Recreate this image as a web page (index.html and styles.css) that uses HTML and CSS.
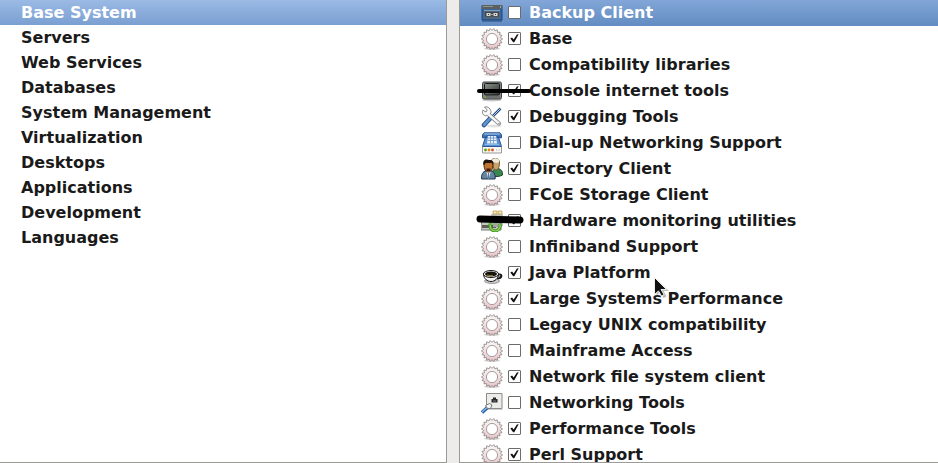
FILE: index.html
```
<!DOCTYPE html>
<html lang="en">
<head>
<meta charset="utf-8">
<title>Package selection</title>
<link rel="stylesheet" href="styles.css">
</head>
<body>
<svg class="defs" aria-hidden="true">
  <defs>
    <linearGradient id="gearFill" x1="0" y1="0" x2="0" y2="1"><stop offset="0" stop-color="#fbfaf8"/><stop offset="1" stop-color="#e8c3ca"/></linearGradient>
    <linearGradient id="blueFill" x1="0" y1="0" x2="0" y2="1"><stop offset="0" stop-color="#6b9bd2"/><stop offset="1" stop-color="#28569a"/></linearGradient>
    <linearGradient id="screenFill" x1="0" y1="0" x2="1" y2="1"><stop offset="0" stop-color="#8b908a"/><stop offset="1" stop-color="#30352f"/></linearGradient>
    <symbol id="gear" viewBox="-11 -11 22 22">
      <ellipse cx="0" cy="9.500" rx="8" ry="1.500" fill="#d5d2d0"/>
      <path d="M10.600 0L8.470 1.490 9.960 3.630 7.450 4.300 8.120 6.810 5.530 6.590 5.300 9.180 2.940 8.080 1.840 10.440 0 8.600-1.840 10.440-2.940 8.080-5.300 9.180-5.530 6.590-8.120 6.810-7.450 4.300-9.960 3.630-8.470 1.490-10.600 0-8.470-1.490-9.960-3.630-7.450-4.300-8.120-6.810-5.530-6.590-5.300-9.180-2.940-8.080-1.840-10.440 0-8.600 1.840-10.440 2.940-8.080 5.300-9.180 5.530-6.590 8.120-6.810 7.450-4.300 9.960-3.630 8.470-1.490z" fill="url(#gearFill)" stroke="#85807e" stroke-width=".8"/>
      <circle r="5.600" fill="#fff" stroke="#9a9694" stroke-width=".9"/>
    </symbol>
    <symbol id="tape" viewBox="0 0 22 22">
      <path d="M1 3.500h20v14.500H1z" fill="#37679f" stroke="#1f477e"/>
      <path d="M1 3h20v4H1z" fill="#59605f"/><path d="M2 4.500h10" stroke="#8b9491"/>
      <path d="M19 5h1" stroke="#eee"/>
      <path d="M3 8h16v9H3z" fill="#536579"/><path d="M3 8.500h16" stroke="#7f9cb9"/>
      <path d="M4 10h14v4.500H4z" fill="#41484d"/>
      <path d="M5.500 11h4v3h-4zM12.500 11h4v3h-4z" fill="#d8d8d5"/>
      <path d="M9.500 12.500h3" stroke="#aaa"/><path d="M7 12.500h1M14 12.500h1" stroke="#333"/>
      <path d="M1 19h20" stroke="#274d7e"/>
    </symbol>
    <symbol id="terminal" viewBox="0 0 22 22">
      <ellipse cx="11" cy="20" rx="10" ry="1.500" fill="#c8c8c8"/>
      <rect x="1.500" y="2" width="19" height="17" rx="1.500" fill="#85888a" stroke="#3d403e"/>
      <rect x="3.500" y="3.500" width="15" height="11.500" rx="1" fill="url(#screenFill)" stroke="#171917"/>
      <path d="M3 17h16" stroke="#555854"/><path d="M3 17h2" stroke="#76c52a"/>
    </symbol>
    <symbol id="tools" viewBox="0 0 22 22">
      <ellipse cx="13" cy="20" rx="8" ry="1.500" fill="#e1e1e1"/>
      <path d="M19.500 2.500L11 11" stroke="#204a87" stroke-width="2.500"/><path d="M19.500 2.500L11 11" stroke="#b9cee4"/>
      <path d="M10 11.500L3 19" stroke="#204a87" stroke-width="4.500" stroke-linecap="round"/><path d="M10 11.500L3 19" stroke="#6295d0" stroke-width="2.600" stroke-linecap="round"/>
      <path d="M6 7L18 17.500" stroke="#777b79" stroke-width="4" stroke-linecap="round"/>
      <path d="M3.500 1L6.200 4 5 6 1.800 4.200C.5 8 3 10.800 7 9.400L10 7C10.400 3 7 0 3.500 1z" fill="#fafafa" stroke="#777b79" stroke-width=".9"/>
      <path d="M6 7L18 17.500" stroke="#f7f7f7" stroke-width="2.400" stroke-linecap="round"/>
      <circle cx="18" cy="17.500" r=".7" fill="#777"/>
    </symbol>
    <symbol id="phone" viewBox="0 0 22 22">
      <path d="M4.500 5h13l3 9.500h-19z" fill="#5a91d0" stroke="#28569a"/>
      <path d="M1.500 14.500h19V21h-19z" fill="#f8f8f5" stroke="#999a96"/>
      <path d="M1.500 14.500h19" stroke="#28569a"/>
      <circle cx="4.500" cy="18" r="1.400" fill="#57a414"/><circle cx="8" cy="18" r="1.400" fill="#e08b12"/><circle cx="11.500" cy="18" r="1.400" fill="#d9503a"/><path d="M15.500 17v2M18 17v2" stroke="#ccc"/>
      <path d="M3 .8h16l1.500 2v3h-4V4h-11v1.800h-4v-3z" fill="url(#blueFill)" stroke="#28569a"/>
      <path d="M3.500 2h15" stroke="#9bc0e8"/>
      <path d="M7 4h8l1 7.500H6z" fill="#eaf0f7"/><path d="M7 6h8M6.500 8.500h9M9.500 4v7.500M12.500 4v7.500" stroke="#6793c4" stroke-width=".8"/>
      <path d="M4 12.500h14" stroke="#8db7e4"/>
    </symbol>
    <symbol id="people" viewBox="0 0 22 22">
      <path d="M11 18c0-6 2-7.500 5-7.500 4 0 6 3 5.500 6.500-2 1.500-7 2-10.500 1z" fill="#3b8750" stroke="#173e25"/>
      <path d="M10.500 3c0-3.500 8-4 8 1 0 4-1 8-3.500 8s-4-5-4.500-9z" fill="#c9a26c" stroke="#6e5427"/>
      <path d="M10.500 3.500c0-4 8-4.500 8 0l-2 1.500-5-1z" fill="#f0eadc"/>
      <path d="M.6 21c-.4-6 2-8.500 7-8.500s7 3 6.500 8.500z" fill="#6485a5" stroke="#1d344e"/>
      <path d="M5 13l2.500 8L10 13z" fill="#dce4ec"/><path d="M7.500 15v5" stroke="#647586"/>
      <path d="M3 6c0-4 9-5 9 0 .3 4-1.500 8-4.500 8S3 11 3 6z" fill="#bd742e" stroke="#3d1e0d"/>
      <path d="M2.500 7C1 1 6 .8 8 2c4-.5 5 2 4 5L11 5 5 5z" fill="#20120d"/>
      <path d="M5.500 10.500h4V13h-4z" fill="#3b1b0e"/>
    </symbol>
    <symbol id="hardware" viewBox="0 0 22 22">
      <path d="M2 8h15l3 7v5H0v-5z" fill="#c5c7c3" stroke="#797c77"/>
      <path d="M1 16.500h14" stroke="#5d605a" stroke-width="3"/>
      <path d="M10 4h12v12H12z" fill="#bfc1b9"/>
      <path d="M12 1h4v3h-4zM17 1h4v3h-4z" fill="#f9e5b0" stroke="#b3964b" stroke-width=".7"/>
      <path d="M12 11h9v6h-9z" fill="#9fa69a"/>
      <path d="M9.500 14a5 5 0 1 0 9-.5" fill="none" stroke="#408d22" stroke-width="3"/>
      <path d="M9.500 14a5 5 0 1 0 9-.5" fill="none" stroke="#8ad853" stroke-width="1.400"/>
      <path d="M6.500 15.500l2.500-4 3.500 3z" fill="#62b436"/>
    </symbol>
    <symbol id="coffee" viewBox="0 0 22 22">
      <ellipse cx="11" cy="19" rx="7.500" ry="2.500" fill="#ccc" stroke="#666" stroke-width=".6"/>
      <path d="M17 13c4.500-1 4 3-1 3" fill="none" stroke="#111" stroke-width="2.600"/><path d="M17 13.200c3-.5 2.500 2-1 2.300" fill="none" stroke="#eee" stroke-width=".8"/>
      <path d="M2.500 12.500c.5 4 3.500 7 7.500 7s7-3 7.500-7z" fill="#f4f4f2" stroke="#151515"/>
      <ellipse cx="10" cy="12" rx="7.600" ry="3.500" fill="#fafafa" stroke="#151515"/>
      <ellipse cx="10" cy="12" rx="6" ry="2.400" fill="#15130a"/><path d="M6 13q3 1.200 6 .2" fill="none" stroke="#8c7b34"/>
    </symbol>
    <symbol id="network" viewBox="0 0 22 22">
      <path d="M5.500 1.500h15.500v15H5.500z" fill="#ececea" stroke="#8a8c88"/>
      <path d="M5.500 17.500h16" stroke="#cfcfcf"/>
      <path d="M10.500 10.500V7h1.500V5.500h3V7h1.500v3.500z" fill="#282a29"/><path d="M12 9h3" stroke="#777"/>
      <path d="M1 20.500L7 15" stroke="#2c62a6" stroke-width="3.600"/><path d="M1 20L7 14.500" stroke="#8ab8e8" stroke-width="1.200"/>
      <path d="M4.500 13.500l4-2 2.500 1.500-1.500 3.500h-3z" fill="#f3f3f3" stroke="#777"/>
    </symbol>
  </defs>
</svg>
<main class="panes">
  <nav class="pane categories" aria-label="Categories">
    <button class="category selected">Base System</button>
    <button class="category">Servers</button>
    <button class="category">Web Services</button>
    <button class="category">Databases</button>
    <button class="category">System Management</button>
    <button class="category">Virtualization</button>
    <button class="category">Desktops</button>
    <button class="category">Applications</button>
    <button class="category">Development</button>
    <button class="category">Languages</button>
  </nav>
  <section class="pane packages" aria-label="Package groups">
    <label class="package selected"><svg class="icon"><use href="#tape"/></svg><input type="checkbox"><span>Backup Client</span></label>
    <label class="package"><svg class="icon"><use href="#gear"/></svg><input type="checkbox" checked><span>Base</span></label>
    <label class="package"><svg class="icon"><use href="#gear"/></svg><input type="checkbox"><span>Compatibility libraries</span></label>
    <label class="package"><svg class="icon"><use href="#terminal"/></svg><input type="checkbox" checked><span>Console internet tools</span>
      <svg class="strike" viewBox="0 0 56 26" aria-hidden="true"><path d="M3 13H53" stroke-width="4"/></svg></label>
    <label class="package"><svg class="icon"><use href="#tools"/></svg><input type="checkbox" checked><span>Debugging Tools</span></label>
    <label class="package"><svg class="icon"><use href="#phone"/></svg><input type="checkbox"><span>Dial-up Networking Support</span></label>
    <label class="package"><svg class="icon"><use href="#people"/></svg><input type="checkbox" checked><span>Directory Client</span></label>
    <label class="package"><svg class="icon"><use href="#gear"/></svg><input type="checkbox"><span>FCoE Storage Client</span></label>
    <label class="package"><svg class="icon"><use href="#hardware"/></svg><input type="checkbox" checked><span>Hardware monitoring utilities</span>
      <svg class="strike" viewBox="0 0 56 26" aria-hidden="true"><path d="M4 11L22 11.500L44 12" stroke-width="7"/></svg></label>
    <label class="package"><svg class="icon"><use href="#gear"/></svg><input type="checkbox"><span>Infiniband Support</span></label>
    <label class="package"><svg class="icon"><use href="#coffee"/></svg><input type="checkbox" checked><span>Java Platform</span>
      <svg class="cursor" viewBox="0 0 16 24" aria-hidden="true"><path class="cursor-shade" d="M2.500 3v16.500l4-3.500 3 6 3-1.500-3-5.500H15z"/><path d="M.5 1.500v17l4-3.500 3 5 2.500-1.500-3-5h5.500z"/></svg></label>
    <label class="package"><svg class="icon"><use href="#gear"/></svg><input type="checkbox" checked><span>Large Systems Performance</span></label>
    <label class="package"><svg class="icon"><use href="#gear"/></svg><input type="checkbox"><span>Legacy UNIX compatibility</span></label>
    <label class="package"><svg class="icon"><use href="#gear"/></svg><input type="checkbox"><span>Mainframe Access</span></label>
    <label class="package"><svg class="icon"><use href="#gear"/></svg><input type="checkbox" checked><span>Network file system client</span></label>
    <label class="package"><svg class="icon"><use href="#network"/></svg><input type="checkbox"><span>Networking Tools</span></label>
    <label class="package"><svg class="icon"><use href="#gear"/></svg><input type="checkbox" checked><span>Performance Tools</span></label>
    <label class="package"><svg class="icon"><use href="#gear"/></svg><input type="checkbox" checked><span>Perl Support</span></label>
  </section>
</main>
</body>
</html>
```
FILE: styles.css
```
* { box-sizing: border-box; }

body {
  margin: 0;
  background: #edeceb;
  color: #1a1a1a;
  font: bold 16px/24px "DejaVu Sans", sans-serif;
}

.defs {
  position: absolute;
  width: 0;
  height: 0;
}

.panes {
  display: grid;
  grid-template-columns: 447fr 479fr;
  column-gap: 12px;
  height: 100vh;
}

.pane {
  display: flex;
  flex-direction: column;
  min-width: 0;
  overflow: hidden;
  background: #fff;
  border-bottom: 1px solid #9c9a97;
}

.categories { border-right: 1px solid #9c9a97; }
.packages { border-left: 1px solid #9c9a97; }

.category {
  flex: none;
  height: 25px;
  padding: 0 21px;
  border: 0;
  background: none;
  color: inherit;
  font: inherit;
  text-align: left;
}

.category.selected {
  background: linear-gradient(#9bbae5, #7a9fd1);
  color: #fff;
}

.package {
  position: relative;
  display: flex;
  flex: none;
  align-items: center;
  height: 26px;
  padding-left: 21px;
  white-space: nowrap;
}

.package.selected {
  background: linear-gradient(#82a6d7, #628cc2);
  color: #fff;
}

.icon {
  width: 22px;
  height: 22px;
  margin-right: 5px;
}

input {
  appearance: none;
  display: grid;
  width: 13px;
  height: 13px;
  margin: 0 8px 1px 0;
  border: 1px solid #6c6b6a;
  border-radius: 1px;
  background: #fff;
}

input:checked::before {
  content: "";
  background: #111;
  clip-path: polygon(12% 50%, 28% 42%, 42% 60%, 72% 14%, 88% 12%, 48% 84%, 38% 84%);
}

.strike {
  position: absolute;
  top: 0;
  left: 16px;
  width: 56px;
  height: 26px;
  fill: none;
  stroke: #000;
  stroke-linecap: round;
}

.cursor {
  position: absolute;
  top: 16px;
  left: 194px;
  z-index: 1;
  width: 16px;
  height: 24px;
  fill: #111;
  stroke: #eee;
}

.cursor-shade {
  fill: #bbb;
  stroke: none;
}
```
